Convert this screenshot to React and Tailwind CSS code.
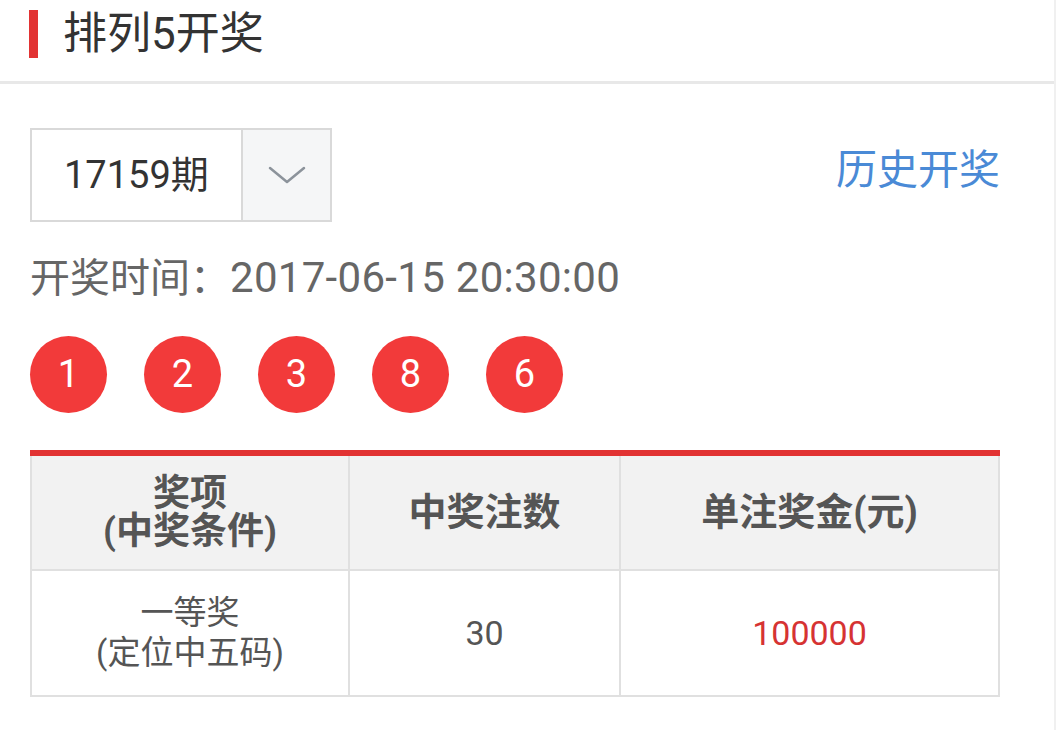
import React from "react";

const font = { fontFamily: 'Roboto, "Noto Sans CJK SC", sans-serif' };

export default function App() {
  const balls = ["1", "2", "3", "8", "6"];
  return (
    <div
      className="w-[1056px] h-[730px] bg-white border-r-2 border-[#f0f0f0] overflow-hidden"
      style={font}
    >
      <div className="h-[84px] flex items-start border-b-[3px] border-[#e8e8e8]">
        <div className="ml-[29px] mt-[10px] w-[9px] h-[48px] bg-[#e23333]" />
        <div className="ml-[25px] mt-[6px] text-[44px] leading-[56px] text-[#333]">排列5开奖</div>
      </div>

      <div className="pl-[30px] pr-[54px]">
        <div className="mt-[44px] flex items-center justify-between">
          <div className="flex h-[94px] border-2 border-[#d9d9d9]">
            <div className="w-[209px] flex items-center pl-[32px] text-[38px] text-[#333] bg-white">
              17159期
            </div>
            <div className="w-[89px] border-l-2 border-[#d9d9d9] bg-[#f5f6f7] flex items-center justify-center">
              <svg width="38" height="20" viewBox="0 0 38 20" fill="none">
                <path d="M2 3 L19 17 L36 3" stroke="#8c939b" strokeWidth="2.5" strokeLinecap="round" strokeLinejoin="round" />
              </svg>
            </div>
          </div>
          <div className="text-[41px] text-[#4a8ad6] -mt-[8px]">历史开奖</div>
        </div>

        <div className="mt-[31px] text-[40px] leading-[50px] text-[#666]">
          开奖时间：<span className="text-[42px] tracking-[0.3px]">2017-06-15 20:30:00</span>
        </div>

        <div className="mt-[32px] flex gap-[37px]">
          {balls.map((b, i) => (
            <div
              key={i}
              className="w-[77px] h-[77px] rounded-full bg-[#f23a3a] flex items-center justify-center text-white text-[38px]"
            >
              {b}
            </div>
          ))}
        </div>

        <div className="mt-[37px] border-t-[6px] border-[#e23333]">
          <div className="grid grid-cols-[318px_271px_1fr] border-l-2 border-r-2 border-b-2 border-[#e0e0e0]">
            <div className="h-[115px] bg-[#f2f2f2] flex flex-col items-center justify-center text-[37px] leading-[38px] font-bold text-[#555] border-r-2 border-b-2 border-[#e0e0e0]">
              <div>奖项</div>
              <div>(中奖条件)</div>
            </div>
            <div className="h-[115px] bg-[#f2f2f2] flex items-center justify-center text-[38px] font-bold text-[#555] border-r-2 border-b-2 border-[#e0e0e0]">
              中奖注数
            </div>
            <div className="h-[115px] bg-[#f2f2f2] flex items-center justify-center text-[38px] font-bold text-[#555] border-b-2 border-[#e0e0e0]">
              单注奖金(元)
            </div>
            <div className="h-[124px] flex flex-col items-center justify-center text-[33px] leading-[40px] text-[#555] border-r-2 border-[#e0e0e0]">
              <div>一等奖</div>
              <div>(定位中五码)</div>
            </div>
            <div className="h-[124px] flex items-center justify-center text-[34px] text-[#555] border-r-2 border-[#e0e0e0]">
              30
            </div>
            <div className="h-[124px] flex items-center justify-center text-[34px] text-[#d63333]">
              100000
            </div>
          </div>
        </div>
      </div>
    </div>
  );
}
